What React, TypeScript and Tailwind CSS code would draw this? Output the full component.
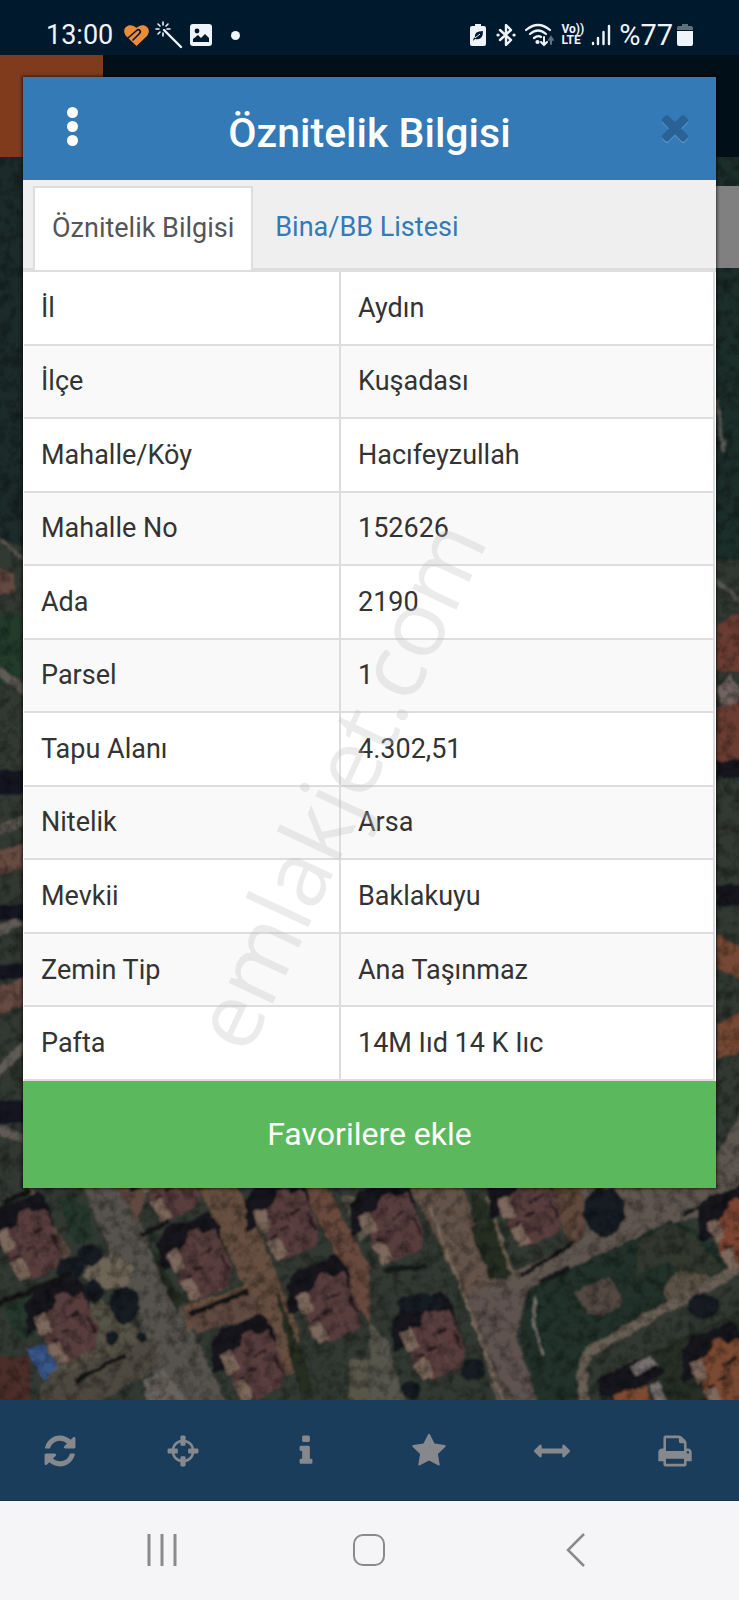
import { useState } from "react";

const rows = [
  ["İl", "Aydın"],
  ["İlçe", "Kuşadası"],
  ["Mahalle/Köy", "Hacıfeyzullah"],
  ["Mahalle No", "152626"],
  ["Ada", "2190"],
  ["Parsel", "1"],
  ["Tapu Alanı", "4.302,51"],
  ["Nitelik", "Arsa"],
  ["Mevkii", "Baklakuyu"],
  ["Zemin Tip", "Ana Taşınmaz"],
  ["Pafta", "14M Iıd 14 K Iıc"],
];

const tools = [
  { label: "Yenile", d: "M1639 1056q0 5-1 7-64 268-268 434.5t-478 166.5q-146 0-282.5-55t-243.5-157l-129 129q-19 19-45 19t-45-19-19-45v-448q0-26 19-45t45-19h448q26 0 45 19t19 45-19 45l-137 137q71 66 161 102t187 36q134 0 250-65t186-179q11-17 53-117 8-23 30-23h192q13 0 22.5 9.5t9.5 22.5zm25-800v448q0 26-19 45t-45 19h-448q-26 0-45-19t-19-45 19-45l138-138q-148-137-349-137-134 0-250 65t-186 179q-11 17-53 117-8 23-30 23h-199q-13 0-22.5-9.5t-9.5-22.5v-7q65-268 270-434.5t480-166.5q146 0 284 55.5t245 156.5l130-129q19-19 45-19t45 19 19 45z" },
  { label: "Konum", d: "M1325 1024h-109q-26 0-45-19t-19-45v-128q0-26 19-45t45-19h109q-32-108-112.5-188.5t-188.5-112.5v109q0 26-19 45t-45 19h-128q-26 0-45-19t-19-45v-109q-108 32-188.5 112.5t-112.5 188.5h109q26 0 45 19t19 45v128q0 26-19 45t-45 19h-109q32 108 112.5 188.5t188.5 112.5v-109q0-26 19-45t45-19h128q26 0 45 19t19 45v109q108-32 188.5-112.5t112.5-188.5zm339-192v128q0 26-19 45t-45 19h-143q-37 161-154.5 278.5t-278.5 154.5v143q0 26-19 45t-45 19h-128q-26 0-45-19t-19-45v-143q-161-37-278.5-154.5t-154.5-278.5h-143q-26 0-45-19t-19-45v-128q0-26 19-45t45-19h143q37-161 154.5-278.5t278.5-154.5v-143q0-26 19-45t45-19h128q26 0 45 19t19 45v143q161 37 278.5 154.5t154.5 278.5h143q26 0 45 19t19 45z" },
  { label: "Bilgi", d: "M1216 1344v128q0 26-19 45t-45 19h-512q-26 0-45-19t-19-45v-128q0-26 19-45t45-19h64v-384h-64q-26 0-45-19t-19-45v-128q0-26 19-45t45-19h384q26 0 45 19t19 45v576h64q26 0 45 19t19 45zm-128-1152v192q0 26-19 45t-45 19h-256q-26 0-45-19t-19-45v-192q0-26 19-45t45-19h256q26 0 45 19t19 45z" },
  { label: "Favoriler", d: "M1728 647q0 22-26 48l-363 354 86 500q1 7 1 20 0 21-10.5 35.5t-30.5 14.5q-19 0-40-12l-449-236-449 236q-22 12-40 12-21 0-31.5-14.5t-10.5-35.5q0-6 2-20l86-500-364-354q-25-27-25-48 0-37 56-46l502-73 225-455q19-41 49-41t49 41l225 455 502 73q56 9 56 46z" },
  { label: "Ölçüm", d: "M1792 896q0 26-19 45l-256 256q-19 19-45 19t-45-19-19-45v-128h-1024v128q0 26-19 45t-45 19-45-19l-256-256q-19-19-19-45t19-45l256-256q19-19 45-19t45 19 19 45v128h1024v-128q0-26 19-45t45-19 45 19l256 256q19 19 19 45z" },
  { label: "Yazdır", d: "M448 1536h896v-256h-896v256zm0-640h896v-384h-160q-40 0-68-28t-28-68v-160h-640v640zm1152 64q0-26-19-45t-45-19-45 19-19 45 19 45 45 19 45-19 19-45zm128 0v416q0 13-9.5 22.5t-22.5 9.5h-224v160q0 40-28 68t-68 28h-960q-40 0-68-28t-28-68v-160h-224q-13 0-22.5-9.5t-9.5-22.5v-416q0-79 56.5-135.5t135.5-56.5h64v-544q0-40 28-68t68-28h672q40 0 88 20t76 48l152 152q28 28 48 76t20 88v256h64q79 0 135.5 56.5t56.5 135.5z" },
];

const closePath = "M1490 1322q0 40-28 68l-136 136q-28 28-68 28t-68-28l-294-294-294 294q-28 28-68 28t-68-28l-136-136q-28-28-28-68t28-68l294-294-294-294q-28-28-28-68t28-68l136-136q28-28 68-28t68 28l294 294 294-294q28-28 68-28t68 28l136 136q28 28 28 68t-28 68l-294 294 294 294q28 28 28 68z";

function StatusBar() {
  return (
    <div className="flex h-[55px] items-center justify-between bg-[#00192d] pt-4 pr-[46px] pb-px pl-[46px] text-[#eef4fa]">
      <div className="flex items-center">
        <span className="text-[27px] leading-8">13:00</span>
        <svg className="ml-[10px] h-6 w-[27px]" viewBox="0 0 27 24">
          <path d="M13.5 23 3 13C-3 5 7-2 13.5 5 20-2 30 5 24 13Z" fill="#ec8c38" />
          <path d="m5 15 8-7c3-3 6 0 3 3l-6 6" fill="none" stroke="#00192d" strokeWidth="1.6" strokeLinecap="round" />
        </svg>
        <svg className="ml-[5px] h-7 w-7" viewBox="0 0 28 28" fill="none" stroke="currentColor" strokeLinecap="round">
          <path d="m9 9 17 17" strokeWidth="2.4" />
          <path d="M8 1v3M8 12v3M1 8h3M12 8h3M3 3l2 2M13 3l-2 2M3 13l2-2" strokeWidth="1.6" />
        </svg>
        <svg className="ml-[7px] h-[22px] w-[22px]" viewBox="0 0 22 22">
          <rect width="22" height="22" rx="3" fill="currentColor" />
          <circle cx="7" cy="7" r="2.4" fill="#00192d" />
          <path d="M3 18v-3l5-4 3 3 4-4 4 4v4Z" fill="#00192d" />
        </svg>
        <span className="ml-[19px] h-[9px] w-[9px] rounded-full bg-current" />
      </div>
      <div className="flex items-center">
        <svg className="h-[22px] w-4" viewBox="0 0 16 22">
          <path d="M5 0h6v2h3q2 0 2 2v16q0 2-2 2H2q-2 0-2-2V4q0-2 2-2h3Z" fill="currentColor" />
          <path d="M13 7q0 10-8 8l-2 2q0-3 2-4-1-6 8-6Z" fill="#00192d" />
          <path d="m5 14 5-4" stroke="currentColor" />
        </svg>
        <svg className="ml-[10px] h-[22px] w-5" viewBox="0 0 20 22" fill="none" stroke="currentColor" strokeWidth="2.4" strokeLinejoin="round" strokeLinecap="round">
          <path d="m4 6 11 10-5 5V1l5 5L4 16" />
          <path d="M2 11h.1M18 11h.1" strokeWidth="3.2" />
        </svg>
        <svg className="ml-[9px] h-6 w-[30px]" viewBox="0 0 30 24" fill="none" stroke="currentColor" strokeWidth="2.2" strokeLinecap="round">
          <path d="M1 7q12-10 24 0M5 11q8-7 16 0M9 15q4-3 7-1" />
          <circle cx="12.500" cy="19" r="1" fill="currentColor" />
          <path d="M19 14v8m-3-3 3 3 3-3" strokeWidth="2" />
          <path d="M26 21v-7m-2 3 2-3 2 3" strokeWidth="2" opacity=".4" />
        </svg>
        <span className="ml-[6px] flex flex-col text-[12px] leading-[11px] font-bold">
          <span>Vo))</span>
          <span>LTE</span>
        </span>
        <svg className="ml-[7px] h-[22px] w-5" viewBox="0 0 20 22" stroke="currentColor" strokeWidth="2.4" strokeLinecap="round">
          <path d="M2 19v1M7 14v6M12.500 8v12M18 2v18" />
        </svg>
        <span className="ml-[8px] text-[29px] leading-8">%77</span>
        <svg className="ml-1 h-[22px] w-4" viewBox="0 0 16 22" fill="currentColor">
          <path d="M5 0h6v2h3q2 0 2 2v2H0V4q0-2 2-2h3Z" opacity=".4" />
          <path d="M0 7h16v13q0 2-2 2H2q-2 0-2-2Z" />
        </svg>
      </div>
    </div>
  );
}

// one villa with its shadow, drawn around 0,0
function House({ x, y, roof = "#583d3c" }: { x: number; y: number; roof?: string }) {
  return (
    <g transform={`translate(${x} ${y})`}>
      <path d="m-125-65 30-45 60-18 60-30 35 45 10 60-120 50-70 30Z" fill="#15161e" />
      <path d="m-70-35 30-20 10-40 25-10 20 15 30-15 20 45 30 70-5 55-80 40-40 5-30-50Z" fill={roof} />
      <path d="m-100-30 32-16 26 58-34 18ZM-60 60l36-18 28 56-32 16Z" fill="#7b675c" />
      <path d="m0-25 40-20M-15 20l25-10M62-30l26 50M-45 45l20-10" stroke="#2e1f24" strokeWidth="9" />
      <path d="m10 0 50 80M-10-60l30 50" stroke="#674b47" strokeWidth="3" />
    </g>
  );
}

function Tree({ x, y, rx = 40, ry = 45 }: { x: number; y: number; rx?: number; ry?: number }) {
  return <ellipse cx={x} cy={y} rx={rx} ry={ry} fill="#191f20" />;
}

function SatelliteMap() {
  return (
    <svg className="absolute inset-0 h-full w-full bg-[#2b3029]" viewBox="0 55 739 1345" preserveAspectRatio="xMidYMax slice" aria-hidden="true">
      <defs>
        <filter id="rough" x="0" y="0" width="100%" height="100%">
          <feTurbulence type="fractalNoise" baseFrequency=".1" numOctaves="3" seed="4" result="n" />
          <feDisplacementMap in="SourceGraphic" in2="n" scale="6" xChannelSelector="R" yChannelSelector="G" result="d" />
          <feGaussianBlur in="d" stdDeviation=".8" />
        </filter>
        <filter id="grain" x="0" y="0" width="100%" height="100%">
          <feTurbulence type="fractalNoise" baseFrequency=".09" numOctaves="4" seed="9" />
          <feColorMatrix values="0 0 0 0 0  0 0 0 0 0  0 0 0 0 0  2.4 0 0 0 -1" />
        </filter>
      </defs>
      <g filter="url(#rough)">
        <rect x="-30" y="25" width="800" height="1430" fill="#333930" />
        {/* forest at the left edge */}
        <path d="M-20 55h60v500L-20 530Z" fill="#1f2b2b" />
        <path d="m-20 525 50 38" stroke="#5c5b54" strokeWidth="3" />
        <path d="m-20 560 34 14v20h-34Z" fill="#644a40" />
        <path d="M-20 615h50v60l-50 15Z" fill="#203a2c" />
        <path d="m-10 665 40 29M-10 834l40-16M-10 934l40-18M-10 1080l40-40M-10 1127l40 13" stroke="#605c54" strokeWidth="9" />
        <path d="M-20 770h50v24h-50ZM-20 905h50v15h-50ZM-20 965h50v14h-50ZM-20 1100h50v24h-50Z" fill="#171923" />
        <path d="m-20 856 50-14v24l-50 14ZM-20 997l50-23v28l-50 20Z" fill="#664c42" />
        {/* right edge */}
        <path d="M705 55h64v505h-64Z" fill="#1f2e2b" />
        <path d="m716 400 8 50M716 580l33 28" stroke="#5a5a55" strokeWidth="4" />
        <path d="m716 625 43-24v70h-43ZM716 710l43-24v66l-43 14Z" fill="#6b3c33" />
        <path d="m716 690 14-16 9 14v14l-16 4Z" fill="#716460" />
        <path d="M716 760h43v18h-43ZM716 885h43v20h-43Z" fill="#17171e" />
        <path d="m716 935 43 22v32l-43-22ZM716 1025l43-22v44l-43 12Z" fill="#754a34" />
        <path d="m702 1180 57-100v90l-47 40Z" fill="#5b5650" />

        <g transform="translate(0 1180) scale(.333)">
          <path d="M240 0h130l80 200 130 260 110 230H490L410 400Z" fill="#56534d" />
          <path d="M590 0h110l80 160 120 300-10 110-50 20-80-170-200 30-10-70 180-60Z" fill="#66503f" />
          <path d="M890 0h80l140 260v170l-60-90-50-140Z" fill="#684a3d" />
          <path d="m80 0 130 210-20 40-60-70Z" fill="#605046" />
          <path d="M340 0h80l20 60-30 60ZM560 390l190-60 30 70-190 60Z" fill="#5f4a40" />
          <path d="m170 50 90 20 20 110-60 10ZM10 390l80-50 20 120-50 20Z" fill="#28382d" />
          <path d="m230 300 220 180-220 130-110-20-30-80 90 10Z" fill="#575247" />
          <path d="m270 240 70-20 60 40-20 60-70 10-60-40Z" fill="#6d6557" />
          <path d="M-20 530H90v160H-20Z" fill="#4b2e2b" />
          <path d="m120 610 340-140 20 90-220 130H130Z" fill="#4d4a40" />
          <House x={90} y={190} />
          <House x={200} y={440} />
          <House x={510} y={10} />
          <House x={600} y={250} />
          <House x={860} y={130} />
          <House x={985} y={380} />
          <House x={760} y={555} />
          <path d="m80 510 45-20 50 70-45 40Z" fill="#38588c" />
          <path d="m820 300 100 250 20 90h-40l-20-80ZM440 180l110 180-20 40-40-90Z" fill="#252e24" />
          <Tree x={375} y={375} rx={46} ry={56} />
          <Tree x={270} y={225} rx={38} ry={34} />
          <Tree x={210} y={265} rx={40} ry={36} />
          <Tree x={282} y={335} rx={30} ry={34} />
          <Tree x={335} y={475} rx={20} ry={20} />
          <Tree x={425} y={470} rx={15} ry={18} />
          <path d="m225 605 150-80M565 405l180-70M-20 378l240-98M10 70l80-40M420 165l90-40" stroke="#181719" strokeWidth="16" />
          <path d="m430 600 60-30 90 120H440Z" fill="#68645b" />
          <path d="m1030 50 30 0 40 120-20 20ZM1050 540h60v150h-60Z" fill="#59574a" />
        </g>

        <g transform="translate(370 1180) scale(.333)">
          <path d="M100 0h170l110 310-70 30 190 350H400L280 340 180 130Z" fill="#64534a" />
          <path d="M290 350 470 330l-30 140 70 220H390Z" fill="#5f5350" />
          <path d="m180 80 100 260 130 350" stroke="#7a6e5d" strokeWidth="8" fill="none" />
          <path d="M640 0h520v60L840 150 470 330l-180 20 90-50 240-110Z" fill="#5f5650" />
          <path d="M520 0h120v180l-40 10Z" fill="#604a3c" />
          <path d="m300 140 70-20 50 170-60 10ZM340 60l-40-30 10 100 60-10Z" fill="#252e24" />
          <path d="m350 50 80 240" stroke="#6e6353" strokeWidth="10" />
          <path d="M470 335 900 120l80 30 120 110-270 140-190 120-30 170H510l-60-220Z" fill="#203229" />
          <path d="m610 340 60-30 50-20 40 80-60 40-40-10Z" fill="#534943" />
          <path d="m880 320 50-50 60 0 40 30-130 80Z" fill="#5a5244" />
          <path d="m800 190 100-60 80 40 80 100-60 20-120-40-80 40Z" fill="#31382e" />
          <path d="m500 350-10 70 30 110" stroke="#78756f" strokeWidth="8" fill="none" />
          <path d="m1150 245-300 160-190 110q-40 40-10 175" stroke="#675f55" strokeWidth="30" fill="none" />
          <path d="m450 290 160-100" stroke="#151618" strokeWidth="13" />
          <path d="m680 600 480-235v325H700Z" fill="#262f28" />
          <House x={65} y={140} />
          <House x={480} y={90} />
          <House x={190} y={490} />
          <House x={1110} y={160} roof="#7c4530" />
          <House x={1060} y={580} roof="#7a4a33" />
          <path d="m680 600 120-60 90 30-110 80h-90Z" fill="#17161f" />
          <path d="m780 565 60-35 20 20-60 40ZM840 620l30-15 30 85h-40Z" fill="#777070" />
          <path d="m730 640 100-20 20 70H730Z" fill="#7d4c32" />
          <path d="m0 430 50 50 60 210H0Z" fill="#57574d" />
          <Tree x={703} y={95} rx={64} ry={74} />
          <Tree x={120} y={630} rx={30} ry={26} />
          <Tree x={1000} y={380} rx={50} ry={36} />
          <Tree x={310} y={570} rx={34} ry={34} />
          <Tree x={150} y={370} rx={70} ry={28} />
          <path d="m600 265-90 40M40 270l130-10M1030 60l-90 45" stroke="#181b1b" strokeWidth="14" />
        </g>
      </g>
      <rect y="55" width="739" height="1345" filter="url(#grain)" opacity=".35" />
    </svg>
  );
}

export default function App() {
  const [tab, setTab] = useState("info");

  return (
    <div className="relative flex min-h-screen flex-col overflow-hidden font-[Roboto,sans-serif]">
      <StatusBar />

      <main className="relative flex-1">
        <SatelliteMap />
        <div className="absolute inset-x-0 top-0 flex h-[102px] bg-[#010f19]">
          <div className="w-[103px] bg-[#803a1c]" />
        </div>
        <div className="absolute top-[131px] right-0 h-[82px] w-10 bg-[#808080]" />

        <section className="relative mx-[23px] mt-[22px] mb-[212px] bg-white shadow-[0_0_3px_1px_rgba(0,0,0,0.6)]">
          <header className="grid h-[103px] grid-cols-[98px_1fr_98px] items-center bg-[#337ab7] text-white">
            <button className="flex flex-col items-center gap-[3px] pb-1" aria-label="Menü">
              <span className="h-[11px] w-[11px] rounded-full bg-white" />
              <span className="h-[11px] w-[11px] rounded-full bg-white" />
              <span className="h-[11px] w-[11px] rounded-full bg-white" />
            </button>
            <h1 className="pt-2 text-center text-[41px] leading-[48px] font-medium">Öznitelik Bilgisi</h1>
            <button className="flex justify-center pb-1 pl-4" aria-label="Kapat">
              <svg className="h-10 w-10" viewBox="0 0 1792 1792">
                <path d={closePath} fill="#5b95c6" transform="translate(0 60)" />
                <path d={closePath} fill="#296294" />
              </svg>
            </button>
          </header>

          <div className="flex h-[92px] border-b-4 border-[#ddd] bg-[#efefef] pt-[6px] pl-[10px] text-[27px]" role="tablist">
            <button role="tab" aria-selected={tab === "info"} onClick={() => setTab("info")} className="-mb-[2px] border-2 border-b-0 border-[#ddd] bg-white px-[17px] pb-[2px] text-[#555]">
              Öznitelik Bilgisi
            </button>
            <button role="tab" aria-selected={tab === "list"} onClick={() => setTab("list")} className="px-[22px] pt-px text-[#337ab7]">
              Bina/BB Listesi
            </button>
          </div>

          <div className="px-px">
            <table className="h-[809px] w-full border-separate border-spacing-0 text-left text-[27px] leading-9 text-[#333]">
              <tbody>
                {rows.map(([name, value]) => (
                  <tr key={name} className="even:bg-[#f9f9f9]">
                    <th scope="row" className="w-[317px] border-r-2 border-b-2 border-[#ddd] pl-[17px] font-normal">{name}</th>
                    <td className="border-r-2 border-b-2 border-[#ddd] pl-[17px]">{value}</td>
                  </tr>
                ))}
              </tbody>
            </table>
          </div>

          <button className="block h-[107px] w-full bg-[#5cb85c] pb-[2px] text-[32px] text-white">Favorilere ekle</button>
        </section>
      </main>

      <nav className="grid h-[101px] grid-cols-6 border-b border-[#12304a] bg-[#1a3d5c] text-[#85898d]">
        {tools.map((t) => (
          <button key={t.label} aria-label={t.label} className="flex items-center justify-center pt-px pr-1">
            <svg className="h-9 w-9" viewBox="0 0 1792 1792" fill="currentColor">
              <path d={t.d} />
            </svg>
          </button>
        ))}
      </nav>

      <div className="grid h-[99px] grid-cols-3 bg-[#f5f5f8] pr-[60px] pb-[2px] pl-[58px] text-[#8a8a8c]">
        <button className="flex items-center justify-center" aria-label="Son uygulamalar">
          <svg className="h-8 w-8" viewBox="0 0 32 32" stroke="currentColor" strokeWidth="3">
            <path d="M3 0v32M16 0v32M29 0v32" />
          </svg>
        </button>
        <button className="flex items-center justify-center" aria-label="Ana ekran">
          <span className="h-8 w-8 rounded-[10px] border-2 border-current" />
        </button>
        <button className="flex items-center justify-center" aria-label="Geri">
          <svg className="h-[34px] w-5" viewBox="0 0 20 34" fill="none" stroke="currentColor" strokeWidth="2.5">
            <path d="M18 1 2 17l16 16" />
          </svg>
        </button>
      </div>

      <div className="pointer-events-none absolute top-[784px] left-[337px] -translate-x-1/2 -translate-y-1/2 -rotate-65 font-['Open_Sans',sans-serif] text-[91px] leading-none text-[#bdbdbd]/30">
        emlakjet.com
      </div>
    </div>
  );
}
